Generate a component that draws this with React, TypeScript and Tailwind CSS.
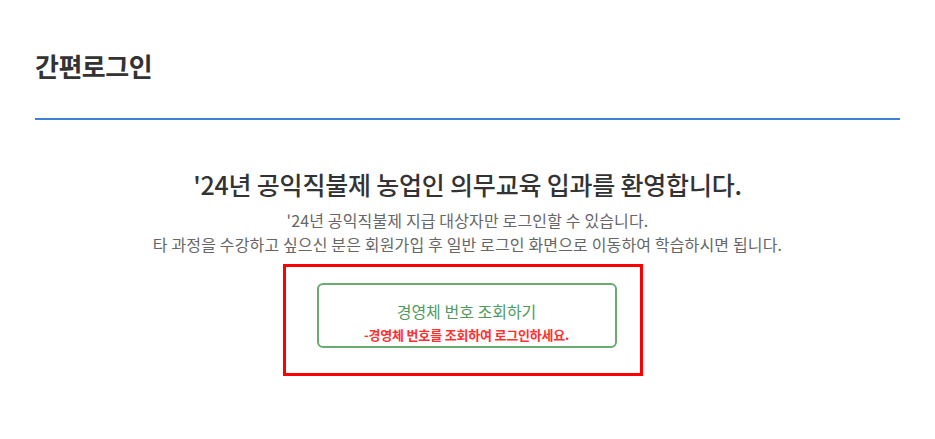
export default function App() {
  const font = { fontFamily: '"Noto Sans CJK KR", "Noto Sans", sans-serif' }

  return (
    <div className="w-[935px] h-[439px] bg-white overflow-hidden" style={font}>
      <div className="px-[35px]">
        {/* 상단 타이틀 */}
        <div className="pt-[48px] pb-[34px] border-b-2 border-[#3b82d4]">
          <h1 className="text-[26px] leading-[36px] font-bold text-[#333] tracking-[-0.5px]">간편로그인</h1>
        </div>

        {/* 안내 */}
        <div className="flex flex-col items-center pt-[47px]">
          <h2 className="text-[25px] leading-[34px] font-medium text-[#333] tracking-[-0.2px]">
            '24년 공익직불제 농업인 의무교육 입과를 환영합니다.
          </h2>
          <div className="mt-[7px] text-[16px] leading-[24px] text-[#666] text-center tracking-[0.15px]">
            <p>'24년 공익직불제 지급 대상자만 로그인할 수 있습니다.</p>
            <p>타 과정을 수강하고 싶으신 분은 회원가입 후 일반 로그인 화면으로 이동하여 학습하시면 됩니다.</p>
          </div>

          {/* 경영체 번호 조회 */}
          <div className="mt-[8px] -translate-x-[5px] w-[360px] h-[112px] border-[3px] border-[#ff0000] pt-[16px] pl-[31px]">
            <button className="w-[300px] h-[65px] border-2 border-[#6aab6f] rounded-[6px] flex flex-col items-center pt-[15px] bg-white">
              <span className="text-[16px] leading-[22px] text-[#4e9a5e]">경영체 번호 조회하기</span>
              <span className="mt-[4px] text-[13px] leading-[18px] font-bold text-[#ff3030] tracking-[-0.2px]">-경영체 번호를 조회하여 로그인하세요.</span>
            </button>
          </div>
        </div>
      </div>
    </div>
  )
}
